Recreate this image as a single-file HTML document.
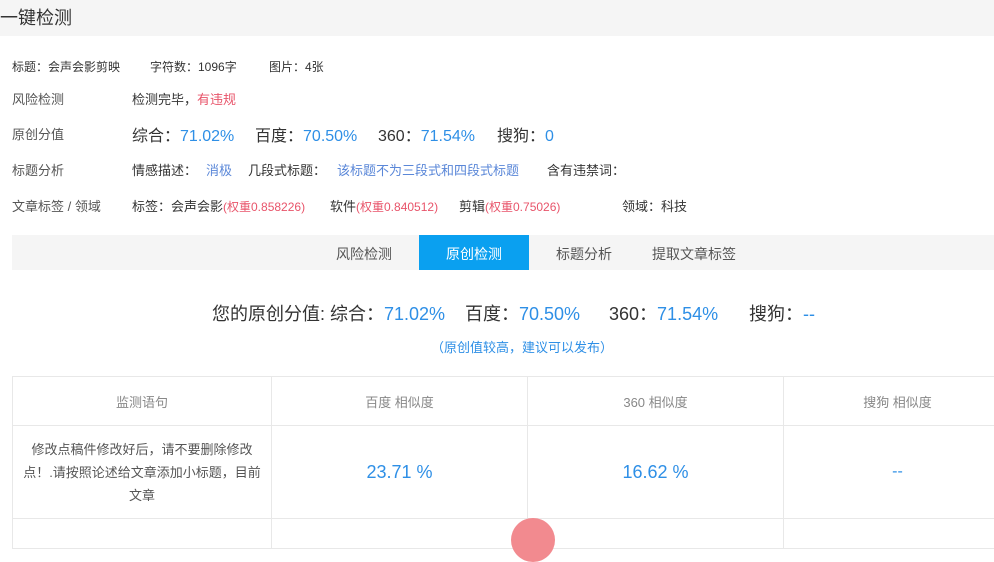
<!DOCTYPE html>
<html><head><meta charset="utf-8"><style>
*{margin:0;padding:0;box-sizing:border-box}
body{width:994px;height:530px;overflow:hidden;background:#fff;font-family:"Liberation Sans","Noto Sans CJK SC",sans-serif;color:#333;position:relative}
.a{position:absolute;white-space:nowrap}
.b{color:#2e8fe6}.r{color:#e8546a}.l{color:#5a87d8}
.hd{position:absolute;left:0;top:0;width:994px;height:36px;background:#f5f5f5}
table{position:absolute;left:12px;top:376px;border-collapse:collapse;table-layout:fixed;width:1000px}
td{border:1px solid #e8e8e8;text-align:center;color:#888;font-size:13px}
</style></head><body>
<div class="hd"></div>
<div class="a" style="left:0;top:4px;font-size:18px;color:#333">一键检测</div>
<div class="a" style="left:12px;top:58px;font-size:12px">标题：会声会影剪映</div>
<div class="a" style="left:150px;top:58px;font-size:12px">字符数：1096字</div>
<div class="a" style="left:269px;top:58px;font-size:12px">图片：4张</div>
<div class="a" style="left:12px;top:89px;font-size:13px;color:#555">风险检测</div>
<div class="a" style="left:132px;top:89px;font-size:13px">检测完毕，<span class="r">有违规</span></div>
<div class="a" style="left:12px;top:124px;font-size:13px;color:#555">原创分值</div>
<div class="a" style="left:132px;top:122px;font-size:16px">综合：<span class="b">71.02%</span></div>
<div class="a" style="left:255px;top:122px;font-size:16px">百度：<span class="b">70.50%</span></div>
<div class="a" style="left:378px;top:122px;font-size:16px">360：<span class="b">71.54%</span></div>
<div class="a" style="left:497px;top:122px;font-size:16px">搜狗：<span class="b">0</span></div>
<div class="a" style="left:12px;top:160px;font-size:13px;color:#555">标题分析</div>
<div class="a" style="left:132px;top:160px;font-size:13px">情感描述：</div>
<div class="a l" style="left:206px;top:160px;font-size:13px">消极</div>
<div class="a" style="left:248px;top:160px;font-size:13px">几段式标题：</div>
<div class="a l" style="left:337px;top:160px;font-size:13px">该标题不为三段式和四段式标题</div>
<div class="a" style="left:547px;top:160px;font-size:13px">含有违禁词：</div>
<div class="a" style="left:12px;top:196px;font-size:13px;color:#555">文章标签 / 领域</div>
<div class="a" style="left:132px;top:196px;font-size:13px">标签：会声会影<span class="r" style="font-size:12px">(权重0.858226)</span></div>
<div class="a" style="left:330px;top:196px;font-size:13px">软件<span class="r" style="font-size:12px">(权重0.840512)</span></div>
<div class="a" style="left:459px;top:196px;font-size:13px">剪辑<span class="r" style="font-size:12px">(权重0.75026)</span></div>
<div class="a" style="left:622px;top:196px;font-size:13px">领域：科技</div>
<div class="a" style="left:12px;top:235px;width:982px;height:35px;background:#f5f5f5"></div>
<div class="a" style="left:419px;top:235px;width:110px;height:35px;background:#0aa0f0"></div>
<div class="a" style="left:336px;top:244px;font-size:14px;color:#555">风险检测</div>
<div class="a" style="left:446px;top:244px;font-size:14px;color:#fff">原创检测</div>
<div class="a" style="left:556px;top:244px;font-size:14px;color:#555">标题分析</div>
<div class="a" style="left:652px;top:244px;font-size:14px;color:#555">提取文章标签</div>
<div class="a" style="left:212px;top:300px;font-size:18px">您的原创分值: 综合：<span class="b">71.02%</span></div>
<div class="a" style="left:465px;top:300px;font-size:18px">百度：<span class="b">70.50%</span></div>
<div class="a" style="left:609px;top:300px;font-size:18px">360：<span class="b">71.54%</span></div>
<div class="a" style="left:749px;top:300px;font-size:18px">搜狗：<span class="b">--</span></div>
<div class="a b" style="left:431px;top:337px;font-size:13px">（原创值较高，建议可以发布）</div>
<table>
<tr style="height:49px"><td style="width:259px">监测语句</td><td style="width:256px">百度 相似度</td><td style="width:256px">360 相似度</td><td>搜狗 相似度</td></tr>
<tr style="height:93px"><td style="color:#555;line-height:23px;padding:0 10px">修改点稿件修改好后，请不要删除修改点！.请按照论述给文章添加小标题，目前文章</td><td class="b" style="font-size:18px">23.71 %</td><td class="b" style="font-size:18px">16.62 %</td><td class="b" style="font-size:16px">--</td></tr>
<tr style="height:30px"><td></td><td></td><td></td><td></td></tr>
</table>
<div class="a" style="left:511px;top:518px;width:44px;height:44px;border-radius:50%;background:#f28a8f"></div>
</body></html>
